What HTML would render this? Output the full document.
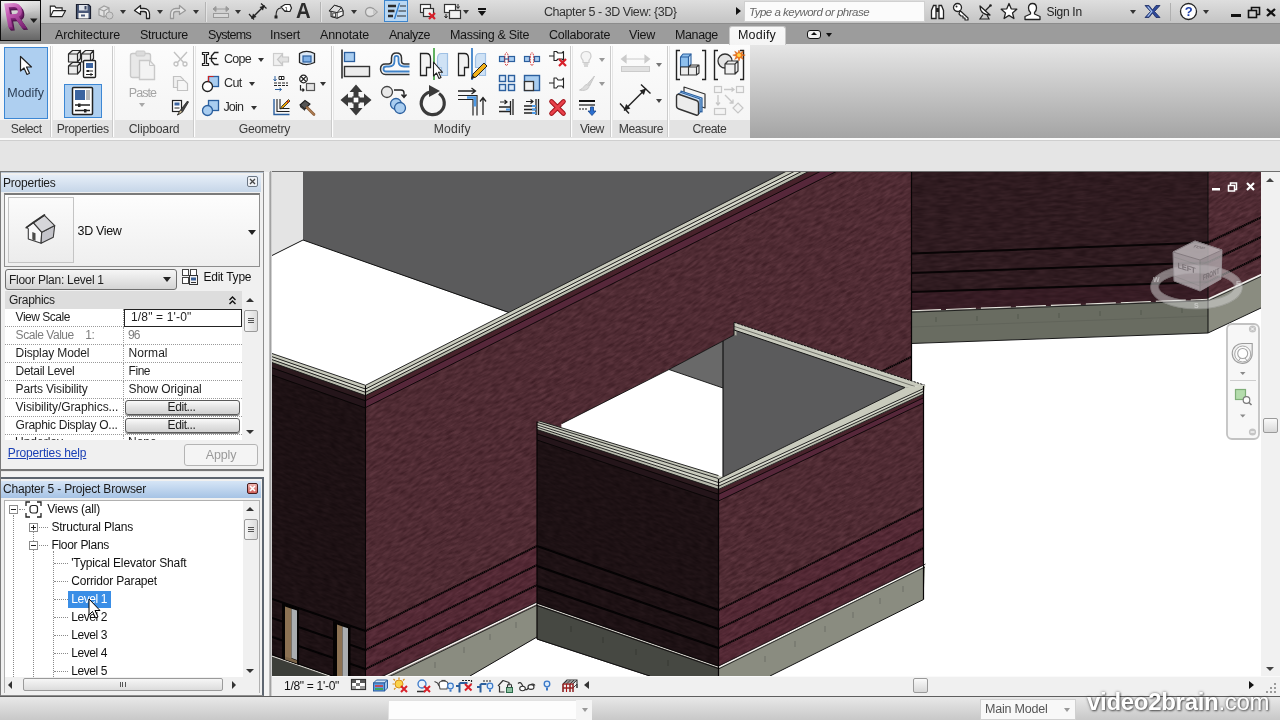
<!DOCTYPE html>
<html><head><meta charset="utf-8">
<style>
*{box-sizing:border-box;margin:0;padding:0}
html,body{width:1280px;height:720px;overflow:hidden;background:#e5e5e5;font-family:"Liberation Sans",sans-serif;font-size:12px;color:#1e1e1e}
.abs{position:absolute}
#title{left:0;top:0;width:1280px;height:24px;background:linear-gradient(#dedede,#c4c4c4);border-bottom:1px solid #8c8c8c}
#tabs{left:0;top:24px;width:1280px;height:20px;background:#9c9c9c}
#tabs span{position:absolute;top:3px;font-size:12.5px;color:#161616;white-space:nowrap}
#ribbon{left:0;top:44px;width:1280px;height:94px;background:linear-gradient(#e6e6e6,#a4a4a4)}
#ribpanels{left:0;top:44px;width:750px;height:94px;background:linear-gradient(#fcfcfc,#f3f3f3)}
#riblabels{left:0;top:120px;width:750px;height:18px;background:#e3e3e3}
.plabel{position:absolute;top:122px;font-size:12.5px;color:#333;text-align:center;white-space:nowrap}
.psep{position:absolute;top:46px;width:2px;height:91px;background:#fafafa;border-left:1px solid #c9c9c9}
#options{left:0;top:138px;width:1280px;height:34px;background:#e5e5e5;border-top:2px solid #fafafa;box-shadow:inset 0 1px 0 #cfcfcf}
#appbtn{left:0;top:0;width:41px;height:41px;background:linear-gradient(#e4e4e4 0%,#c2c2c2 28%,#8e8e8e 62%,#666 100%);border:1px solid #0c0c0c}
</style></head><body><div id="wrap" style="position:absolute;left:0;top:0;width:1280px;height:720px;will-change:transform;overflow:hidden">
<div class="abs" id="title"></div>
<div class="abs" id="tabs"></div>
<div class="abs" id="ribbon"></div>
<div class="abs" id="ribpanels"></div>
<div class="abs" id="riblabels"></div>
<div class="abs" id="options"></div>
<div class="abs" id="appbtn"></div>
<!--SCENE_START--><svg class="abs" style="left:272px;top:172px" width="990" height="504" viewBox="272 172 990 504">
<defs>
<filter id="nzLit" x="0" y="0" width="1" height="1" color-interpolation-filters="sRGB"><feTurbulence type="fractalNoise" baseFrequency="0.13 0.36" numOctaves="2" seed="7"/><feColorMatrix type="matrix" values="0.190 0 0 0 0.215  0.143 0 0 0 0.097  0.152 0 0 0 0.124  0 0 0 0 1"/></filter>
<filter id="nzDark" x="0" y="0" width="1" height="1" color-interpolation-filters="sRGB"><feTurbulence type="fractalNoise" baseFrequency="0.13 0.36" numOctaves="2" seed="11"/><feColorMatrix type="matrix" values="0.080 0 0 0 0.074  0.060 0 0 0 0.037  0.064 0 0 0 0.046  0 0 0 0 1"/></filter>
<filter id="nzFar" x="0" y="0" width="1" height="1" color-interpolation-filters="sRGB"><feTurbulence type="fractalNoise" baseFrequency="0.08 0.36" numOctaves="2" seed="5"/><feColorMatrix type="matrix" values="0.120 0 0 0 0.124  0.090 0 0 0 0.061  0.096 0 0 0 0.077  0 0 0 0 1"/></filter>
<clipPath id="cFar"><polygon points="911,172 1208,172 1208,300 911,311.5"/></clipPath>
<clipPath id="cFarR"><polygon points="1208,172 1262,172 1262,275 1208,300"/></clipPath>
<clipPath id="cLeft"><polygon points="272,354 365.5,386.5 365.5,676 272,676"/></clipPath>
<clipPath id="cMain"><polygon points="365.5,386.5 786,172 911.5,172 911.5,381 734,322.5 734,335 723,341 669,369.5 561.5,424 561.5,432 537,424 537,676 365.5,676"/></clipPath>
<clipPath id="cFront"><polygon points="537,429 718.5,489 718.5,676 537,676"/></clipPath>
<clipPath id="cRight"><polygon points="718.5,489.4 923.5,394 923.5,566 718.5,668"/></clipPath>
</defs>
<rect x="272" y="172" width="990" height="504" fill="#fff"/>
<polygon points="272,172 303,172 303,240 272,255" fill="#e4e4e4"/>
<polygon points="303,172 790,172 509,313 303,240" fill="#5b5b5c"/>
<path d="M272,255.5 L303,240 L509,312.5" fill="none" stroke="#111" stroke-width="1"/>
<polygon points="911,172 1208,172 1208,300 911,311.5" fill="#2f1b20"/><g clip-path="url(#cFar)"><g transform="matrix(1 -0.036 0 1 0 0)"><rect x="910" y="203" width="299" height="154" filter="url(#nzFar)"/></g></g>
<polygon points="911,292 1208,282 1208,300 911,311.5" fill="#5a1f38" opacity=".18"/>
<polygon points="911,311.5 1208,300 1208,333 911,343.5" fill="#696c61"/>
<g stroke="#080405" stroke-width="2" fill="none"><path d="M911,253.6 L1208,242.6"/><path d="M911,273 L1208,262.5"/><path d="M911,292 L1208,282"/></g>
<path d="M911,310.8 L1208,299.3" stroke="#e4e4dc" stroke-width="1.1" stroke-dasharray="30 5"/>
<path d="M911,312.2 L1208,300.7" stroke="#1a1a1a" stroke-width="0.9"/>
<path d="M911,343.5 L1208,333" stroke="#1a1a1a" stroke-width="1"/>
<path d="M911,327 L1208,316" stroke="#5c5f56" stroke-width="1" opacity=".6"/>
<g stroke="#55584f" stroke-width="1"><path d="M936,317v5"/><path d="M977,316v5"/><path d="M1018,314v5"/><path d="M1059,313v5"/><path d="M1100,311v5"/><path d="M1141,310v5"/><path d="M1182,308v5"/></g>
<polygon points="1208,172 1262,172 1262,275 1208,300" fill="#4f2b33"/><g clip-path="url(#cFarR)"><g transform="matrix(1 -0.47 0 1 0 0)"><rect x="1207" y="738" width="56" height="157" filter="url(#nzLit)"/></g></g>
<polygon points="1208,300 1262,275 1262,307.5 1208,333" fill="#8a8c80"/>
<g stroke="#080405" stroke-width="2.200" fill="none" stroke-dasharray="1.6 0.4"><path d="M1208,242.6 L1262,217"/><path d="M1208,262.5 L1262,236.6"/><path d="M1208,282 L1262,255.7"/></g>
<path d="M1208,299.3 L1262,274.3" stroke="#f2f2ee" stroke-width="1.5"/><path d="M1208,301 L1262,276" stroke="#1a1a1a" stroke-width=".8"/>
<path d="M1208,333 L1262,307.5" stroke="#1a1a1a" stroke-width="1"/>
<path d="M1208,172 L1208,333" stroke="#0c0c0c" stroke-width="1"/>
<polygon points="272,354 365.5,386.5 365.5,676 272,676" fill="#1d1114"/><g clip-path="url(#cLeft)"><g transform="matrix(1 0.345 0 1 0 0)"><rect x="271" y="226" width="96" height="358" filter="url(#nzDark)"/></g></g>
<polygon points="365.5,386.5 786,172 911.5,172 911.5,381 734,322.5 734,335 723,341 669,369.5 561.5,424 561.5,432 537,424 537,676 365.5,676" fill="#4f2b33"/><g clip-path="url(#cMain)"><g transform="matrix(1 -0.505 0 1 0 0)"><rect x="364" y="355" width="548" height="784" filter="url(#nzLit)"/></g></g>
<polygon points="365.5,631 537,546 537,605 388,676 365.5,676" fill="#6a1f40" opacity=".16"/>
<g stroke="#080405" stroke-width="2" fill="none" stroke-dasharray="1.6 0.4"><path d="M365.5,631 L537,546"/><path d="M365.5,650 L537,565"/><path d="M365.5,669 L537,585"/><path d="M911,357 L858,383"/></g>
<polygon points="388,676 537,604.5 537,637 470,676" fill="#8a8c80"/>
<polygon points="470,676 537,637 537,676" fill="#fff"/>
<path d="M385,676.5 L537,603.3" stroke="#f4f4f0" stroke-width="1.5"/>
<path d="M382,676.5 L537,602" stroke="#141414" stroke-width="0.8"/>
<path d="M389,676.8 L537,605.2" stroke="#141414" stroke-width="0.8"/>
<path d="M470,676 L537,637" stroke="#111" stroke-width="1"/>
<g stroke="#6d6f66" stroke-width="1"><path d="M435,662v6"/><path d="M464,647v6"/><path d="M490,634v6"/><path d="M516,622v6"/></g>
<g stroke="#050304" stroke-width="2" fill="none"><path d="M272,599 L365.5,631"/><path d="M272,618 L365.5,650"/><path d="M272,637 L365.5,669"/></g>
<polygon points="272,657 328,676 272,676" fill="#3c3e39"/>
<path d="M272,656 L330,676" stroke="#d0d0c8" stroke-width="1.300"/><path d="M272,654.700 L333,676" stroke="#050303" stroke-width="1"/>
<g><polygon points="282,603 299,609 299,665 282,659" fill="#050303"/>
<polygon points="285,606.5 291.5,608.7 291.5,660 285,657.8" fill="#8c7253"/>
<polygon points="291.5,608.7 297,610.6 297,660 291.5,658" fill="#a9adb0"/>
<polygon points="285,656.5 297,660.6 297,663.5 285,659.5" fill="#7c6548"/>
<polygon points="333,621 350.5,627 350.5,676 333,676" fill="#050303"/>
<polygon points="337,624.5 342.5,626.4 342.5,676 337,676" fill="#8c7253"/>
<polygon points="342.5,626.4 348,628.3 348,676 342.5,676" fill="#a9adb0"/></g>
<polygon points="272.0,362.5 365.5,395.5 365.5,400.8 272.0,367.8" fill="#2c1a1e"/><polygon points="272.0,367.8 365.5,400.8 365.5,408.0 272.0,375.0" fill="#24151a"/><path d="M272,367.8 L365.5,400.8" stroke="#070405" stroke-width="0.9"/><path d="M272,375.0 L365.5,408.0" stroke="#070405" stroke-width="0.9"/>
<polygon points="272.0,353.5 365.5,385.3 365.5,389.0 272.0,356.7" fill="#c9cbbd"/><polygon points="272.0,356.7 365.5,389.0 365.5,392.3 272.0,359.6" fill="#d6d8cb"/><polygon points="272.0,359.6 365.5,392.3 365.5,395.6 272.0,362.5" fill="#b9bbad"/><path d="M272,353.5 L365.5,385.3" stroke="#141414" stroke-width="0.9"/><path d="M272,356.7 L365.5,389.0" stroke="#141414" stroke-width="0.9"/><path d="M272,359.6 L365.5,392.3" stroke="#141414" stroke-width="0.9"/><path d="M272,362.5 L365.5,395.6" stroke="#141414" stroke-width="0.9"/>
<polygon points="365.5,395.6 860.0,145.5 860.0,151.4 365.5,400.6" fill="#48222b"/><polygon points="365.5,400.6 860.0,151.4 860.0,159.6 365.5,407.6" fill="#56273a"/><path d="M365.5,400.6 L860,151.4" stroke="#0c0607" stroke-width="0.9"/><path d="M365.5,407.6 L860,159.6" stroke="#0c0607" stroke-width="0.9"/>
<polygon points="365.5,385.3 860.0,133.8 860.0,138.1 365.5,389.0" fill="#c9cbbd"/><polygon points="365.5,389.0 860.0,138.1 860.0,141.8 365.5,392.3" fill="#d6d8cb"/><polygon points="365.5,392.3 860.0,141.8 860.0,145.5 365.5,395.6" fill="#b9bbad"/><path d="M365.5,385.3 L860,133.8" stroke="#141414" stroke-width="0.9"/><path d="M365.5,389.0 L860,138.1" stroke="#141414" stroke-width="0.9"/><path d="M365.5,392.3 L860,141.8" stroke="#141414" stroke-width="0.9"/><path d="M365.5,395.6 L860,145.5" stroke="#141414" stroke-width="0.9"/>
<path d="M365.5,385.5 L365.5,676" stroke="#070405" stroke-width="1.1"/>
<path d="M911.5,172 L911.5,381" stroke="#070405" stroke-width="1.2"/>
<polygon points="561.5,424 669,369.5 723,387.5 723,482 718.5,479.5 561.5,429" fill="#fff"/>
<polygon points="669,369.5 723,341 723,388" fill="#696969"/>
<polygon points="723,341 734,335 734,327 912,387 723,478" fill="#5b5b5c"/>
<path d="M723,341 L723,477" stroke="#0c0c0c" stroke-width="1.1"/>
<path d="M562,423.5 L669,369.5 L723,388" stroke="#111" stroke-width="0.9" fill="none"/>
<path d="M669,369.5 L723,341 L734,335" stroke="#111" stroke-width="0.9" fill="none"/>
<polygon points="734,322.5 925,385.5 905,387.5 734,330" fill="#c9cbbe"/>
<polygon points="734,322.5 734,335 736.5,335.5 736.5,330.5" fill="#b0b2a6"/>
<path d="M734,322.3 L925,385.3" stroke="#141414" stroke-width="1" stroke-dasharray="2.5 1"/>
<path d="M734,330 L905,387.5" stroke="#141414" stroke-width="1"/>
<path d="M734,326.3 L915,386.5" stroke="#5a5b54" stroke-width="0.8"/>
<path d="M734,322.5 L734,335" stroke="#141414" stroke-width="1"/>
<polygon points="537,429 718.5,489 718.5,676 537,676" fill="#1d1114"/><g clip-path="url(#cFront)"><g transform="matrix(1 0.33 0 1 0 0)"><rect x="536" y="190" width="184" height="311" filter="url(#nzDark)"/></g></g>
<polygon points="537,605 718.5,668 718.5,676 650,676 537,639" fill="#464842"/>
<polygon points="537,639.5 650,676.5 537,676.5" fill="#fff"/>
<path d="M537,639 L650,676" stroke="#111" stroke-width="1"/>
<path d="M537,604.3 L718.5,667.3" stroke="#d4d4cc" stroke-width="1.2"/>
<path d="M537,603 L718.5,666" stroke="#050304" stroke-width="0.8"/>
<path d="M537,605.6 L718.5,668.6" stroke="#050304" stroke-width="0.8"/>
<g stroke="#050304" stroke-width="2" fill="none"><path d="M537,546 L718.5,610"/><path d="M537,566 L718.5,629"/><path d="M537,586 L718.5,648"/></g>
<g stroke="#363832" stroke-width="1"><path d="M571,626v6"/><path d="M603,637v6"/><path d="M636,649v6"/><path d="M668,660v6"/></g>
<polygon points="718.5,489.4 923.5,394 923.5,566 718.5,668" fill="#522d35"/><g clip-path="url(#cRight)"><g transform="matrix(1 -0.495 0 1 0 0)"><rect x="718" y="748" width="207" height="379" filter="url(#nzLit)"/></g></g>
<polygon points="718.5,610 923.5,508 923.5,566 718.5,668" fill="#6a1f40" opacity=".16"/>
<polygon points="718.5,668 925,566 923.5,599.5 770,676 718.5,676" fill="#8a8c80"/>
<path d="M718.5,667.3 L925.5,565.3" stroke="#f4f4f0" stroke-width="1.5"/>
<path d="M718.5,666 L925.5,564" stroke="#141414" stroke-width="0.8"/>
<path d="M718.5,669 L925,567" stroke="#141414" stroke-width="0.8"/>
<path d="M770,676 L923.5,599.5" stroke="#111" stroke-width="1"/>
<g stroke="#080405" stroke-width="2" fill="none" stroke-dasharray="1.6 0.4"><path d="M718.5,610 L923.5,508"/><path d="M718.5,629 L923.5,529"/><path d="M718.5,648 L923.5,548"/></g>
<g stroke="#6d6f66" stroke-width="1"><path d="M765,656v6"/><path d="M795,641v6"/><path d="M825,626v6"/><path d="M853,612v6"/><path d="M880,598v6"/><path d="M903,586v6"/></g>
<polygon points="537.0,429.5 718.5,489.3 718.5,494.2 537.0,433.9" fill="#2c1a1e"/><polygon points="537.0,433.9 718.5,494.2 718.5,501.0 537.0,440.0" fill="#24151a"/><path d="M537,433.9 L718.5,494.2" stroke="#070405" stroke-width="0.9"/><path d="M537,440.0 L718.5,501.0" stroke="#070405" stroke-width="0.9"/>
<polygon points="718.5,475.6 723,477 718.5,479.6" fill="#c9cbbd"/>
<polygon points="537.0,420.3 718.5,475.6 718.5,478.6 537.0,422.3" fill="#c4c6b8"/><polygon points="537.0,422.3 718.5,478.6 718.5,482.5 537.0,424.9" fill="#c9cbbd"/><polygon points="537.0,424.9 718.5,482.5 718.5,485.9 537.0,427.2" fill="#d6d8cb"/><polygon points="537.0,427.2 718.5,485.9 718.5,489.3 537.0,429.5" fill="#b9bbad"/><path d="M537,420.3 L718.5,475.6" stroke="#141414" stroke-width="0.9"/><path d="M537,422.3 L718.5,478.6" stroke="#141414" stroke-width="0.9"/><path d="M537,424.9 L718.5,482.5" stroke="#141414" stroke-width="0.9"/><path d="M537,427.2 L718.5,485.9" stroke="#141414" stroke-width="0.9"/><path d="M537,429.5 L718.5,489.3" stroke="#141414" stroke-width="0.9"/>
<polygon points="536,419 542,419.9 537,422.3 536,422.3" fill="#4f2b33"/>
<polygon points="718.5,489.4 923.5,394.0 923.5,397.8 718.5,494.3" fill="#48222b"/><polygon points="718.5,494.3 923.5,397.8 923.5,403.0 718.5,501.0" fill="#56273a"/><path d="M718.5,494.3 L923.5,397.8" stroke="#0c0607" stroke-width="0.9"/><path d="M718.5,501.0 L923.5,403.0" stroke="#0c0607" stroke-width="0.9"/>
<polygon points="718.5,479.4 723,477 905,387.5 925.5,385.3 923.5,394 718.5,489.4" fill="#c9cbbd"/>
<polygon points="718.5,479.4 923.5,385.5 923.5,388.6 718.5,483.0" fill="#c9cbbd"/><polygon points="718.5,483.0 923.5,388.6 923.5,391.3 718.5,486.2" fill="#d6d8cb"/><polygon points="718.5,486.2 923.5,391.3 923.5,394.0 718.5,489.4" fill="#b9bbad"/><path d="M718.5,483.0 L923.5,388.6" stroke="#141414" stroke-width="0.9"/><path d="M718.5,486.2 L923.5,391.3" stroke="#141414" stroke-width="0.9"/><path d="M718.5,489.4 L923.5,394.0" stroke="#141414" stroke-width="0.9"/>
<path d="M718.5,479.4 L723,477 L905,387.5" stroke="#141414" stroke-width="0.9" fill="none"/>
<path d="M718.5,479 L718.5,676" stroke="#070405" stroke-width="1.2"/>
<path d="M923.5,386 L923.5,599.5" stroke="#070405" stroke-width="1.2"/>
<path d="M537,421.5 L537,639" stroke="#070405" stroke-width="1.2"/>
<!--OVERLAY_START--><!-- viewport window controls -->
<rect x="1212" y="188" width="8" height="2.500" fill="#fff"/>
<path d="M1230.500,185.500v-2.500h6v6.500h-2" fill="none" stroke="#fff" stroke-width="1.500"/><rect x="1228.500" y="185.500" width="6" height="5.500" fill="none" stroke="#fff" stroke-width="1.500"/>
<path d="M1247,183l7,7M1254,183l-7,7" stroke="#fff" stroke-width="2.200"/>
<!-- view cube -->
<g opacity=".5">
 <ellipse cx="1196.500" cy="287" rx="42" ry="18" fill="none" stroke="#dcdcdc" stroke-width="8"/>
 <ellipse cx="1196.500" cy="287" rx="46" ry="22" fill="none" stroke="#a8a8a8" stroke-width=".8" />
 <ellipse cx="1196.500" cy="287" rx="38" ry="14" fill="none" stroke="#a8a8a8" stroke-width=".8" />
</g>
<g opacity=".8">
 <path d="M1173,252l22,-11l27,9l-1,29l-21,12l-26,-10z" fill="#bdb6ba" stroke="#9a9498" stroke-width="1"/>
 <path d="M1200,260l22,-10l-1,29l-21,12z" fill="#b3acb0"/>
 <path d="M1173,252l22,-11l27,9l-22,10z" fill="#c9c3c6" stroke="#9a9498" stroke-width="1"/>
 <path d="M1200,260l0,31" stroke="#9c9c9c" stroke-width="1"/>
 <path d="M1174,257l26,8.500l21,-10M1174,276l26,10l21,-11.500" stroke="#a8a8a8" stroke-width=".8" fill="none"/>
</g>
<g opacity=".8" font-family="Liberation Sans" font-size="8" font-weight="bold" fill="#6e666a"><text transform="matrix(0.960 0.290 0 1 1177.500 268)" textLength="19">LEFT</text><text transform="matrix(0.910 -0.410 0 1 1203 280.500)" textLength="18" lengthAdjust="spacingAndGlyphs">FRONT</text><text transform="matrix(0.950 0.200 -0.600 0.500 1192 247)" font-size="6">TOP</text></g>
<g opacity=".55" font-family="Liberation Sans" font-size="7" font-weight="bold" fill="#e8e8e8"><text x="1194" y="308">S</text><text x="1236" y="286">E</text><text x="1153" y="282">W</text></g>
<!-- nav bar -->
<rect x="1227" y="324" width="32" height="115" rx="5" fill="#f7f7f7" stroke="#c2c2c2" stroke-width="1.800"/>
<circle cx="1252.500" cy="329" r="3.600" fill="#c4c4c4"/><path d="M1251,327.500l3,3M1254,327.500l-3,3" stroke="#fff" stroke-width="1"/>
<circle cx="1252.500" cy="432" r="3.600" fill="#c4c4c4"/><path d="M1250.500,432h4" stroke="#fff" stroke-width="1.200"/>
<path d="M1242.700,343.500h9.500v9.500a10,10 0 1 1 -9.500,-9.500z" fill="#f2f2f2" stroke="#9c9c9c" stroke-width="1.100"/><circle cx="1242.700" cy="354" r="8" fill="#fafafa" stroke="#a8a8a8" stroke-width="1"/><circle cx="1242.700" cy="353.500" r="5" fill="#fff" stroke="#a4a4a4" stroke-width="1.100"/><path d="M1238,361.500l2.500,-3.500M1247.500,361.500l-2.500,-3.500" stroke="#a4a4a4" stroke-width="1"/>
<path d="M1240,372h5.500l-2.750,3z" fill="#8a8a8a"/>
<path d="M1230,380.500h26" stroke="#cdcdcd"/>
<rect x="1235.500" y="389.500" width="10" height="10" fill="#b4dcac" stroke="#7fae78" stroke-width="1.200"/><circle cx="1246.500" cy="400" r="3.300" fill="#fff" stroke="#7a7a7a" stroke-width="1.200"/><path d="M1249,402.500l2.500,2.500" stroke="#7a7a7a" stroke-width="1.600"/>
<path d="M1240,414.500h5.500l-2.750,3z" fill="#8a8a8a"/>
<!--OVERLAY_END-->
</svg><!--SCENE_END-->
<!--TOP_START--><style>
#tabs span{position:absolute;top:3px;font-size:12.5px;color:#161616;white-space:nowrap}
.dd{position:absolute;width:0;height:0;border:3px solid transparent;border-top:4px solid #333;border-bottom:none}
.rt{position:absolute;font-size:12.500px;color:#2a2a2a;white-space:nowrap}
.ic{position:absolute;overflow:visible}
</style>
<!-- TITLE BAR CONTENT -->
<div class="abs" style="left:0;top:0;width:1280px;height:24px">
 <!-- open -->
 <svg class="ic" style="left:49px;top:4px" width="17.500" height="14" viewBox="0 0 20 16"><path d="M1.500,14.500V2.500h5l1.500,2h7v3" fill="#fff" stroke="#222" stroke-width="1.300"/><path d="M1.500,14.500l3.500,-7h14l-4,7z" fill="#f4f4f4" stroke="#222" stroke-width="1.300" stroke-linejoin="round"/></svg>
 <!-- save -->
 <svg class="ic" style="left:75px;top:3px" width="17" height="17" viewBox="0 0 17 17"><path d="M1.500,1.500h12l2,2v12h-14z" fill="#4a5878" stroke="#1c2030" stroke-width="1.200"/><rect x="4" y="2" width="8.500" height="5.500" fill="#dfe3ea"/><rect x="9.500" y="3" width="2" height="3.500" fill="#3a4560"/><rect x="3.500" y="10" width="10" height="5.500" fill="#f2f2f2"/><rect x="6" y="11.500" width="4" height="2" fill="#4a5878"/></svg>
 <!-- sync (gray) -->
 <svg class="ic" style="left:97px;top:3px" width="18" height="18" viewBox="0 0 18 18" opacity=".75"><path d="M2,6l5,-3l5,2v6l-5,3l-5,-2z M7,8l5,-3 M7,8v6 M2,6l5,2" fill="#e8e8e8" stroke="#8e8e8e" stroke-width="1.200"/><circle cx="12.500" cy="12.500" r="3.500" fill="#cfcfcf" stroke="#8e8e8e"/></svg>
 <div class="dd" style="left:120px;top:10px"></div>
 <!-- undo -->
 <svg class="ic" style="left:133px;top:4px" width="18" height="16" viewBox="0 0 18 16"><path d="M1.500,6.500L7.500,1.500V4.500H11c3.500,0 5.500,2.500 5.500,5.500v4.500h-3V10c0,-1.500 -1,-2.500 -2.500,-2.500H7.500v3z" fill="#fff" stroke="#222" stroke-width="1.300" stroke-linejoin="round"/></svg>
 <div class="dd" style="left:157px;top:10px"></div>
 <!-- redo gray -->
 <svg class="ic" style="left:169px;top:4px" width="18" height="16" viewBox="0 0 18 16"><path d="M16.500,6.500L10.500,1.500V4.500H7c-3.500,0 -5.500,2.500 -5.500,5.500v4.500h3V10c0,-1.500 1,-2.500 2.500,-2.500h3.500v3z" fill="#e6e6e6" stroke="#9a9a9a" stroke-width="1.300" stroke-linejoin="round"/></svg>
 <div class="dd" style="left:193px;top:10px"></div>
 <div class="abs" style="left:205px;top:2px;width:1px;height:20px;background:#b4b4b4;border-right:1px solid #e4e4e4;width:2px"></div>
 <!-- measure gray -->
 <svg class="ic" style="left:212px;top:5px" width="18" height="14" viewBox="0 0 18 14"><path d="M1,4h16M1,4l3,-2.500v5zM17,4l-3,-2.500v5z" stroke="#9a9a9a" fill="#9a9a9a" stroke-width="1"/><rect x="1.500" y="8.500" width="15" height="4" fill="#d8d8d8" stroke="#9a9a9a"/></svg>
 <div class="dd" style="left:235px;top:10px"></div>
 <!-- aligned dim -->
 <svg class="ic" style="left:248px;top:2px" width="20" height="20" viewBox="0 0 20 20"><path d="M3.500,16.500L16.500,3.500" stroke="#222" stroke-width="1.400"/><path d="M3.500,16.500L5,11.500L8.500,15z M16.500,3.500L15,8.500L11.500,5z" fill="#222"/><path d="M1,12l5,5.500 M13,1.500l5.500,5" stroke="#222" stroke-width="1.200"/></svg>
 <!-- tag -->
 <svg class="ic" style="left:273px;top:3px" width="20" height="18" viewBox="0 0 20 18"><path d="M8,4l4,-2.500h5l1.500,3.500l-1.500,3.500h-5z" fill="#fff" stroke="#222" stroke-width="1.200"/><text x="11.500" y="8" font-size="6" font-family="Liberation Sans" fill="#111">1</text><path d="M8,5c-4,0 -5,3 -5,8" stroke="#222" stroke-width="1.200" fill="none"/><rect x="1.500" y="12.500" width="3" height="3" fill="#222"/></svg>
 <div class="abs" style="left:296px;top:-2px;font-size:22px;font-weight:bold;color:#2c2c2c;transform:scaleX(.92);transform-origin:0 0">A</div>
 <div class="abs" style="left:320px;top:2px;width:2px;height:20px;background:#b4b4b4;border-right:1px solid #e4e4e4"></div>
 <!-- 3d house -->
 <svg class="ic" style="left:328px;top:4px" width="16.500" height="15.500" viewBox="0 0 19 18"><path d="M1.500,8L7.500,1.500l8,2.500l2,4v5l-7,3.500l-7,-2V8.500z" fill="#f4f4f4" stroke="#222" stroke-width="1.300" stroke-linejoin="round"/><path d="M1.500,8L7.500,1.500l8,2.500l-5,6z" fill="#ddd" stroke="#222" stroke-width="1.100" stroke-linejoin="round"/><path d="M10.500,10v6.500M10.500,10l7,-2" stroke="#222" fill="none"/><rect x="5.500" y="10.500" width="3" height="4.500" fill="#fff" stroke="#222"/></svg>
 <div class="dd" style="left:351px;top:10px"></div>
 <!-- thin lines gray -->
 <svg class="ic" style="left:364px;top:5px" width="15" height="14" viewBox="0 0 15 14"><circle cx="6" cy="7" r="4.500" fill="#e0e0e0" stroke="#9a9a9a" stroke-width="1.300"/><path d="M9,3l4.500,4l-4.500,4" fill="#c8c8c8" stroke="#9a9a9a"/></svg>
 <!-- selected icon -->
 <div class="abs" style="left:384px;top:0;width:24px;height:22px;background:#b9d7f2;border:1px solid #3d85cc"></div>
 <svg class="ic" style="left:387px;top:3px" width="19" height="16" viewBox="0 0 19 16"><path d="M1,3h8M1,8h6.500M1,13h5" stroke="#2a2a2a" stroke-width="2.600"/><path d="M13,3h6M11.500,8h7.500M10,13h9" stroke="#2a2a2a" stroke-width="1.200"/><path d="M12.500,0L7.500,16" stroke="#2f7fd0" stroke-width="1.300"/></svg>
 <!-- close hidden -->
 <svg class="ic" style="left:419px;top:3px" width="19" height="18" viewBox="0 0 19 18"><rect x="1.500" y="1.500" width="10" height="8" fill="#fff" stroke="#333" stroke-width="1.200"/><rect x="4.500" y="5.500" width="10" height="8" fill="#f0f0f0" stroke="#333" stroke-width="1.200"/><path d="M10,10l6,6M16,10l-6,6" stroke="#d8202a" stroke-width="2.200"/></svg>
 <!-- switch windows -->
 <svg class="ic" style="left:443px;top:3px" width="19" height="18" viewBox="0 0 19 18"><rect x="1.500" y="1.500" width="11" height="8" fill="#fff" stroke="#333" stroke-width="1.200"/><rect x="6.500" y="7.500" width="11" height="8" fill="#f0f0f0" stroke="#333" stroke-width="1.200"/><path d="M15,1v4M13.500,3.500l1.500,2l1.500,-2M3,11v4M1.500,13l1.500,2l1.500,-2" stroke="#222" fill="none"/></svg>
 <div class="dd" style="left:463px;top:10px"></div>
 <div class="abs" style="left:478px;top:8px;width:8px;height:1.500px;background:#111"></div>
 <div class="dd" style="left:478px;top:11px;border-width:4px;border-top:5px solid #111"></div>
 <!-- title -->
 <div class="abs" style="left:544px;top:5px;font-size:12.500px;letter-spacing:-0.44px;color:#333;white-space:nowrap" id="ttl">Chapter 5 - 3D View: {3D}</div>
 <div class="abs" style="left:736px;top:7px;width:0;height:0;border:4px solid transparent;border-left:5px solid #111;border-right:none"></div>
 <!-- search -->
 <div class="abs" style="left:744px;top:1px;width:181px;height:21px;background:#fbfbfb;border:1px solid #d0d0d0;font-size:11.500px;letter-spacing:-0.5px;font-style:italic;color:#666;padding:4px 0 0 4px;white-space:nowrap">Type a keyword or phrase</div>
 <!-- binoculars -->
 <svg class="ic" style="left:929px;top:3px" width="17" height="17" viewBox="0 0 17 17"><path d="M2.500,15.500v-8l2,-5h2.500v13z M14.500,15.500v-8l-2,-5h-2.500v13z" fill="#fff" stroke="#222" stroke-width="1.300"/><rect x="7" y="5" width="3" height="4" fill="#222"/></svg>
 <!-- key -->
 <svg class="ic" style="left:952px;top:2px" width="18" height="19" viewBox="0 0 18 19"><circle cx="5.500" cy="5.500" r="4" fill="#fff" stroke="#222" stroke-width="1.300"/><circle cx="4.500" cy="4.500" r="1" fill="#222"/><path d="M8,8.500l8,7.500v2h-3v-2h-2v-2h-2l-2,-2z" fill="#fff" stroke="#222" stroke-width="1.200" stroke-linejoin="round"/></svg>
 <!-- satellite -->
 <svg class="ic" style="left:977px;top:3px" width="17" height="17" viewBox="0 0 17 17"><path d="M3,3c0,6 4,9 10,9z" fill="#fff" stroke="#222" stroke-width="1.300" stroke-linejoin="round"/><path d="M8,8l5,-5" stroke="#222" stroke-width="1.200"/><circle cx="13.500" cy="2.500" r="1.300" fill="#222"/><path d="M6,11.500l-3,4.500h9l-2,-4" fill="none" stroke="#222" stroke-width="1.200"/></svg>
 <!-- star -->
 <svg class="ic" style="left:1000px;top:2px" width="18" height="18" viewBox="0 0 18 18"><path d="M9,1.500l2.200,5.300l5.600,0.400l-4.300,3.700l1.400,5.600L9,13.400l-4.900,3.100l1.400,-5.600L1.200,7.200l5.600,-0.400z" fill="#fff" stroke="#222" stroke-width="1.300" stroke-linejoin="round"/></svg>
 <!-- person -->
 <svg class="ic" style="left:1023px;top:2px" width="19" height="19" viewBox="0 0 19 19"><path d="M9.500,1.500c2.500,0 4,1.800 4,4.500c0,2.200 -1,3.800 -2,4.600v1.400l5.500,2.500v3h-15v-3l5.500,-2.500v-1.400c-1,-0.800 -2,-2.400 -2,-4.600c0,-2.700 1.500,-4.500 4,-4.500z" fill="#fff" stroke="#222" stroke-width="1.300" stroke-linejoin="round"/></svg>
 <div class="abs" style="left:1046.500px;top:5px;font-size:12px;letter-spacing:-0.3px;color:#222;white-space:nowrap" id="signin">Sign In</div>
 <div class="dd" style="left:1130px;top:10px"></div>
 <!-- X exchange -->
 <svg class="ic" style="left:1144px;top:4px" width="17" height="15" viewBox="0 0 17 15"><path d="M1,1.500h4l3.500,4.500l3.500,-4.500h4l-5.500,6l5.500,6h-4l-3.500,-4.500l-3.500,4.500h-4l5.500,-6z" fill="#2f4a9a" stroke="#1a2a60" stroke-width=".8"/><path d="M3,2.500h1.500l4,5l-4,5H3l4,-5z" fill="#a8c4ee"/></svg>
 <div class="abs" style="left:1170px;top:3px;width:1px;height:18px;background:#b0b0b0"></div>
 <!-- help -->
 <svg class="ic" style="left:1179px;top:2px" width="19" height="19" viewBox="0 0 19 19"><circle cx="9.500" cy="9.500" r="8" fill="#fff" stroke="#222" stroke-width="1.300"/><text x="5.800" y="14.200" font-size="13" font-weight="bold" font-family="Liberation Sans" fill="#1e3fa8">?</text></svg>
 <div class="dd" style="left:1203px;top:10px"></div>
 <!-- window controls -->
 <div class="abs" style="left:1231px;top:14px;width:10px;height:3px;background:#111"></div>
 <svg class="ic" style="left:1247px;top:6px" width="14" height="13" viewBox="0 0 14 13"><path d="M4.500,4V1.500h8v7H10" fill="none" stroke="#111" stroke-width="1.600"/><rect x="1.500" y="4.500" width="8" height="7" fill="none" stroke="#111" stroke-width="1.600"/></svg>
 <svg class="ic" style="left:1266px;top:8px" width="10" height="9" viewBox="0 0 10 9"><path d="M1,1l8,7M9,1l-8,7" stroke="#111" stroke-width="2.300"/></svg>
</div>
<!-- TABS -->
<div class="abs" id="tabs2" style="left:0;top:24px;width:1280px;height:20px">
<style>#tabs2 span{position:absolute;top:4px;font-size:12.500px;color:#141414;white-space:nowrap}</style>
 <div class="abs" style="left:729px;top:2px;width:57px;height:19px;background:linear-gradient(#f8f8f8,#f4f4f4);border:1px solid #c8c8c8;border-bottom:none;border-radius:3px 3px 0 0"></div>
 <span style="left:55px;letter-spacing:-0.14px">Architecture</span><span style="left:140px;letter-spacing:-0.30px">Structure</span><span style="left:208px;letter-spacing:-0.70px">Systems</span><span style="left:270px;letter-spacing:-0.22px">Insert</span><span style="left:320px;letter-spacing:-0.12px">Annotate</span><span style="left:389px;letter-spacing:-0.50px">Analyze</span><span style="left:450px;letter-spacing:-0.31px">Massing &amp; Site</span><span style="left:549px;letter-spacing:-0.26px">Collaborate</span><span style="left:629px;letter-spacing:-0.22px">View</span><span style="left:675px;letter-spacing:-0.37px">Manage</span><span style="left:738px;letter-spacing:0.20px">Modify</span>
 <div class="abs" style="left:807px;top:6px;width:14px;height:9px;border:1.500px solid #111;border-radius:3px;background:#f0f0f0"></div>
 <div class="abs" style="left:811px;top:8px;width:0;height:0;border:3px solid transparent;border-bottom:3.500px solid #111;border-top:none"></div>
 <div class="dd" style="left:826px;top:9px;border-top-color:#111"></div>
</div>
<div class="abs" style="left:0;top:44px;width:760px;height:94px">
<style>
.psep{position:absolute;top:2px;width:3px;height:91px;background:#fefefe;border-left:1px solid #cbcbcb;border-right:1px solid #e6e6e6}
.plabel{position:absolute;top:78px;font-size:12.200px;color:#3a3a3a;white-space:nowrap;transform:translateX(-50%)}
</style>
 <div class="psep" style="left:50px"></div><div class="psep" style="left:112px"></div><div class="psep" style="left:193px"></div><div class="psep" style="left:331px"></div><div class="psep" style="left:570px"></div><div class="psep" style="left:610px"></div><div class="psep" style="left:667px"></div>
 <div class="plabel" style="left:26.2px;letter-spacing:-0.52px">Select</div><div class="plabel" style="left:82.7px;letter-spacing:-0.36px">Properties</div><div class="plabel" style="left:154.1px;letter-spacing:-0.16px">Clipboard</div><div class="plabel" style="left:264.4px;letter-spacing:-0.29px">Geometry</div><div class="plabel" style="left:452.2px;letter-spacing:0.17px">Modify</div><div class="plabel" style="left:591.9px;letter-spacing:-0.61px">View</div><div class="plabel" style="left:640.9px;letter-spacing:-0.45px">Measure</div><div class="plabel" style="left:709.4px;letter-spacing:-0.48px">Create</div>
 <!-- Select: Modify button -->
 <div class="abs" style="left:4px;top:3px;width:44px;height:72px;background:#aecff0;border:1px solid #3c87d4"></div>
 <svg class="ic" style="left:19px;top:11px" width="14" height="21" viewBox="0 0 14 21"><path d="M1.500,1.500V16l3.500,-3l3,6.500l2.500,-1.200l-3,-6.300h5z" fill="#fff" stroke="#222" stroke-width="1.200" stroke-linejoin="round"/></svg>
 <div class="rt" style="left:7.3px;top:42px;color:#2c3e55;letter-spacing:-0.02px">Modify</div>
 <!-- Properties: type props -->
 <svg class="ic" style="left:67px;top:5px" width="31" height="30" viewBox="0 0 31 30"><g fill="#ececec" stroke="#2a2a2a" stroke-width="1.200" stroke-linejoin="round"><path d="M1.500,5l4,-3.500h8l-3,3.500z M1.500,5h9v8h-9z M10.500,5l3,-3.500v8l-3,3.500z"/><path d="M14.500,5l4,-3.500h8l-3,3.500z M14.500,5h9v8h-9z M23.500,5l3,-3.500v8l-3,3.500z"/><path d="M1.500,17l4,-3.500h8l-3,3.500z M1.500,17h9v8h-9z M10.500,17l3,-3.500v8l-3,3.500z"/></g><rect x="16.500" y="11.500" width="12" height="17" rx="1" fill="#fff" stroke="#222" stroke-width="1.400"/><rect x="19" y="14" width="7" height="5" fill="#3c64a0"/><path d="M19,22h7M19,25.500h7" stroke="#222" stroke-width="1.200"/><rect x="20" y="21" width="2" height="2" fill="#222"/><rect x="23" y="24.500" width="2" height="2" fill="#222"/></svg>
 <div class="abs" style="left:64px;top:40px;width:38px;height:34px;background:#aecff0;border:1px solid #3c87d4"></div>
 <svg class="ic" style="left:71px;top:42px" width="24" height="30" viewBox="0 0 24 30"><rect x="1.500" y="1.500" width="20" height="27" rx="1" fill="#fff" stroke="#222" stroke-width="1.500"/><rect x="4" y="4" width="10" height="10" fill="#3c64a0"/><rect x="15" y="4" width="4" height="10" fill="#b8b8b8"/><path d="M4,19h15M4,24.500h15" stroke="#222" stroke-width="1.300"/><rect x="7" y="17.500" width="2.500" height="3.500" fill="#222"/><rect x="13" y="23" width="2.500" height="3.500" fill="#222"/></svg>
 <!-- Clipboard -->
 <svg class="ic" style="left:129px;top:6px" width="28" height="32" viewBox="0 0 28 32" opacity=".8"><rect x="1.500" y="3.500" width="20" height="24" rx="2" fill="#e4e4e4" stroke="#bdbdbd" stroke-width="1.400"/><rect x="7" y="1" width="9" height="5" rx="1" fill="#d4d4d4" stroke="#bdbdbd"/><path d="M10.500,10.500h10l5,5v14h-15z" fill="#f2f2f2" stroke="#bdbdbd" stroke-width="1.400"/><path d="M20.500,10.500v5h5" fill="none" stroke="#bdbdbd"/></svg>
 <div class="rt" style="left:128.8px;top:42px;color:#a4a4a4;letter-spacing:-0.96px">Paste</div>
 <div class="dd" style="left:139px;top:59px;border-top-color:#a8a8a8"></div>
 <svg class="ic" style="left:172px;top:7px" width="17" height="16" viewBox="0 0 17 16"><path d="M2,1l10,11M15,1L5,12" stroke="#c2c2c2" stroke-width="1.400"/><circle cx="4" cy="13" r="2" fill="none" stroke="#c2c2c2" stroke-width="1.300"/><circle cx="13" cy="13" r="2" fill="none" stroke="#c2c2c2" stroke-width="1.300"/></svg>
 <svg class="ic" style="left:172px;top:31px" width="17" height="17" viewBox="0 0 17 17"><path d="M1.500,1.500h7l3,3v8h-10z" fill="#f0f0f0" stroke="#c2c2c2" stroke-width="1.200"/><path d="M5.500,5.500h7l3,3v7h-10z" fill="#f6f6f6" stroke="#c2c2c2" stroke-width="1.200"/></svg>
 <svg class="ic" style="left:171px;top:55px" width="18" height="18" viewBox="0 0 18 18"><rect x="1.500" y="1.500" width="9" height="11" fill="#fff" stroke="#222" stroke-width="1.200"/><rect x="3.500" y="3.500" width="5" height="3" fill="#3c64a0"/><path d="M3.500,9h5" stroke="#222"/><path d="M16.500,2l-7,9l-3,5l5,-3l6,-10z" fill="#444" stroke="#222" stroke-width=".8"/><path d="M6.500,16l3,-5l2,2z" fill="#d8c7a0" stroke="#222" stroke-width=".6"/></svg>
 <!-- Geometry -->
 <svg class="ic" style="left:201px;top:7px" width="19" height="16" viewBox="0 0 19 16"><path d="M1.500,1.500h6v2h-2v9h2v2h-6v-2h2v-9h-2z" fill="#f0f0f0" stroke="#222" stroke-width="1.200"/><path d="M17.500,1.500h-4l-3,3.500v5l3,3.500h4" fill="none" stroke="#222" stroke-width="1.400"/><path d="M8,7.500h8" stroke="#222" stroke-width="1.300"/></svg>
 <div class="rt" style="left:223.9px;top:8px;letter-spacing:-0.70px">Cope</div><div class="dd" style="left:258px;top:14px"></div>
 <svg class="ic" style="left:201px;top:31px" width="19" height="18" viewBox="0 0 19 18"><rect x="7.500" y="1.500" width="10" height="10" fill="#a9cdf0" stroke="#2b5f9e" stroke-width="1.300"/><circle cx="6.500" cy="11.500" r="5" fill="#fff" stroke="#222" stroke-width="1.300"/><path d="M7.500,6.500v-5h5" fill="none" stroke="#c22" stroke-width="1.200"/></svg>
 <div class="rt" style="left:223.9px;top:32px;letter-spacing:-0.53px">Cut</div><div class="dd" style="left:249px;top:38px"></div>
 <svg class="ic" style="left:201px;top:55px" width="19" height="18" viewBox="0 0 19 18"><rect x="7.500" y="1.500" width="10" height="10" fill="#a9cdf0" stroke="#2b5f9e" stroke-width="1.300"/><circle cx="6.500" cy="11.500" r="5" fill="#a9cdf0" stroke="#2b5f9e" stroke-width="1.300"/></svg>
 <div class="rt" style="left:223.4px;top:56px;letter-spacing:-0.83px">Join</div><div class="dd" style="left:251px;top:62px"></div>
 <svg class="ic" style="left:272px;top:7px" width="18" height="17" viewBox="0 0 18 17" opacity=".8"><rect x="1.500" y="2.500" width="9" height="12" fill="#eee" stroke="#c2c2c2" stroke-width="1.200"/><path d="M16.500,6h-6v-3l-5,5.500l5,5.500v-3h6z" fill="#ddd" stroke="#bbb" stroke-width="1.200"/></svg>
 <svg class="ic" style="left:272px;top:31px" width="18" height="18" viewBox="0 0 18 18"><path d="M3,1v5M1.500,4l1.500,2l1.500,-2" stroke="#2b5f9e" fill="none"/><path d="M7,1.500h5v3h-5zM9.500,1.500v3" stroke="#222" fill="#fff"/><path d="M2,8h14M2,10.500h14" stroke="#222" stroke-width="1.200" stroke-dasharray="3 1"/><path d="M3,14.500h6M7.500,13l2,1.500l-2,1.500" stroke="#2b5f9e" fill="none"/></svg>
 <svg class="ic" style="left:272px;top:54px" width="19" height="19" viewBox="0 0 19 19"><path d="M2,1v15.500h15.500" fill="none" stroke="#2b5f9e" stroke-width="1.400"/><path d="M5,1v12.500h12.500M8,1v9.500h9.500" fill="none" stroke="#222" stroke-width="1.100"/><path d="M16.500,1.500l1.500,1.500l-7,7l-2.500,1l1,-2.500z" fill="#f0a500" stroke="#222" stroke-width=".8"/><path d="M15,3l1.500,1.500" stroke="#c22" stroke-width="1.500"/></svg>
 <svg class="ic" style="left:298px;top:6px" width="18" height="18" viewBox="0 0 18 18"><path d="M1.500,3.500c4,-2.500 10,-2.500 15,0v9c-5,2.500 -11,2.500 -15,0z" fill="#dce9f7" stroke="#222" stroke-width="1.300"/><rect x="5" y="6" width="8" height="6" fill="#7fb0e6" stroke="#2b5f9e" stroke-width="1.200"/></svg>
 <svg class="ic" style="left:298px;top:30px" width="18" height="19" viewBox="0 0 18 19"><circle cx="5.500" cy="5" r="3.800" fill="#fff" stroke="#222" stroke-width="1.200"/><path d="M3,2.500l5,5M8,2.500l-5,5" stroke="#222" stroke-width="1.100"/><rect x="8.500" y="9.500" width="8" height="7" fill="#e4e4e4" stroke="#555" stroke-width="1.200"/><path d="M2.500,11v5h3M4.500,14.500l1.500,1.500l-1.500,1.500" stroke="#222" fill="none" stroke-width="1.200"/></svg>
 <div class="dd" style="left:320px;top:38px"></div>
 <svg class="ic" style="left:298px;top:55px" width="18" height="18" viewBox="0 0 18 18"><path d="M2,6l5,-4.500l5,3.500l-5,5z" fill="#555" stroke="#222" stroke-width="1.100"/><path d="M2,6v2l5,4v-2z" fill="#333"/><path d="M9,8.500l7,7" stroke="#8a5a33" stroke-width="2.600" stroke-linecap="round"/><path d="M9,8.500l7,7" stroke="#c9986b" stroke-width="1" stroke-linecap="round"/></svg>
 <!-- Modify panel big icons -->
 <svg class="ic" style="left:340px;top:5px" width="32" height="30" viewBox="0 0 32 30"><path d="M2,0.500v29" stroke="#222" stroke-width="1.500"/><rect x="4.500" y="3.500" width="10" height="9" fill="#a9cdf0" stroke="#2b5f9e" stroke-width="1.300"/><rect x="4.500" y="17.500" width="25" height="10" fill="#ececec" stroke="#333" stroke-width="1.400"/></svg>
 <svg class="ic" style="left:379px;top:7px" width="32" height="26" viewBox="0 0 32 26"><path d="M1.500,18c0,-3 2,-5 5,-5h3c2,0 3,-1 3,-3v-3c0,-3 2,-5 5,-5c3,0 5,2 5,5v3c0,2 1,3 3,3h5" fill="none" stroke="#333" stroke-width="1.500"/><path d="M1.500,18c0,3 2,5.500 5,5.500h24" fill="none" stroke="#333" stroke-width="1.500"/><path d="M4.500,18c0,-1.500 1,-2.500 2.500,-2.500h3c3.500,0 5.500,-2 5.500,-5.500v-3c0,-1.500 0.800,-2.200 2,-2.200c1.200,0 2,0.700 2,2.200v3c0,3.500 2,5.500 5.500,5.500h5.500M4.500,18c0,1.500 1,2.500 2.500,2.500h23.500" fill="none" stroke="#3f82c8" stroke-width="1.800"/></svg>
 <svg class="ic" style="left:419px;top:4px" width="30" height="32" viewBox="0 0 30 32"><path d="M1.500,27.500v-22h6c3,0 4,2 4,5v9h-4v8z" fill="#f2f2f2" stroke="#222" stroke-width="1.300"/><path d="M28.500,27.500v-22h-6c-3,0 -4,2 -4,5v9h4v8z" fill="#cfe2f5" stroke="#9fc0e4" stroke-width="1.200"/><path d="M15,0v32" stroke="#3aa03a" stroke-width="1.600"/><path d="M14.500,14v14l3,-3l2.500,5.500l2,-1l-2.500,-5.200h4z" fill="#fff" stroke="#222" stroke-width="1.100" stroke-linejoin="round"/></svg>
 <svg class="ic" style="left:457px;top:4px" width="32" height="32" viewBox="0 0 32 32"><path d="M1.500,27.500v-22h6c3,0 4,2 4,5v9h-4v8z" fill="#f2f2f2" stroke="#222" stroke-width="1.300"/><path d="M28.500,27.500v-22h-6c-3,0 -4,2 -4,5v9h4v8z" fill="#cfe2f5" stroke="#9fc0e4" stroke-width="1.200"/><path d="M15,0v32" stroke="#3f82c8" stroke-width="1.800"/><path d="M27,15l3,3l-11,11l-4.500,1.500l1.500,-4.500z" fill="#f2b21a" stroke="#222" stroke-width="1"/><path d="M15.800,27l-1.300,3.500l3.500,-1.300z" fill="#222"/></svg>
 <svg class="ic" style="left:340px;top:40px" width="32" height="32" viewBox="0 0 32 32"><path d="M16,0.500l6.500,7.500h-4v5.500h5.500v-4l7.500,6.500l-7.500,6.500v-4h-5.500v5.500h4l-6.500,7.500l-6.500,-7.500h4v-5.500h-5.500v4l-7.500,-6.500l7.500,-6.500v4h5.500v-5.500h-4z" fill="#3a3a3a"/><rect x="13" y="13" width="6" height="6" fill="#fff" stroke="#3a3a3a" stroke-width="1.300"/></svg>
 <svg class="ic" style="left:380px;top:41px" width="30" height="30" viewBox="0 0 30 30"><circle cx="7" cy="7" r="5.500" fill="#e9e9e9" stroke="#444" stroke-width="1.300"/><circle cx="16" cy="19" r="5.500" fill="#a9cdf0" stroke="#2b5f9e" stroke-width="1.300"/><circle cx="20" cy="23" r="5.500" fill="#a9cdf0" stroke="#2b5f9e" stroke-width="1.300"/><path d="M14,5h7c2,0 3,1 3,3v4M21.500,9.500l2.500,3l2.500,-3" fill="none" stroke="#222" stroke-width="1.400"/></svg>
 <svg class="ic" style="left:419px;top:41px" width="30" height="32" viewBox="0 0 30 32"><path d="M11,7a11.500,11.500 0 1 0 9,1.500" fill="none" stroke="#3a3a3a" stroke-width="3.200"/><path d="M10,0l11,6l-11,6z" fill="#3a3a3a"/></svg>
 <svg class="ic" style="left:457px;top:41px" width="33" height="32" viewBox="0 0 33 32"><path d="M1,6h17M14.500,3l4,3l-4,3" fill="none" stroke="#222" stroke-width="1.300"/><path d="M1,10.500h19v20M1,14.500h15v16" fill="none" stroke="#222" stroke-width="1.200"/><path d="M10,12.500h8v9" fill="none" stroke="#4e9ae6" stroke-width="2.600"/><path d="M26,30v-17M23,16.500l3,-4l3,4" fill="none" stroke="#222" stroke-width="1.300"/></svg>
 <!-- small icons col1 -->
 <svg class="ic" style="left:498px;top:6px" width="18" height="18" viewBox="0 0 18 18"><rect x="1.500" y="6.500" width="5" height="5" fill="#a9cdf0" stroke="#2b5f9e" stroke-width="1.200"/><rect x="10.500" y="6.500" width="6" height="5" fill="#a9cdf0" stroke="#2b5f9e" stroke-width="1.200"/><path d="M6.500,9h4" stroke="#2b5f9e" stroke-width="1.200"/><ellipse cx="8.500" cy="9" rx="1.800" ry="6.500" fill="none" stroke="#c22" stroke-width="1" stroke-dasharray="1.500 1"/></svg>
 <svg class="ic" style="left:498px;top:30px" width="18" height="18" viewBox="0 0 18 18"><g fill="#dbe9f8" stroke="#2b5f9e" stroke-width="1.400"><rect x="1.500" y="1.500" width="6" height="6"/><rect x="10.500" y="1.500" width="6" height="6"/><rect x="1.500" y="10.500" width="6" height="6"/><rect x="10.500" y="10.500" width="6" height="6"/></g></svg>
 <svg class="ic" style="left:498px;top:54px" width="18" height="18" viewBox="0 0 18 18"><path d="M15,1v16M12.500,3v14" stroke="#222" stroke-width="1.300"/><path d="M2,4h7M6.500,2l2.500,2l-2.500,2" stroke="#222" fill="none" stroke-width="1.200"/><path d="M1,9h11M1,13.500h11" stroke="#222" stroke-width="1.300"/><path d="M8,11.500h4" stroke="#4e9ae6" stroke-width="2"/></svg>
 <!-- col2 -->
 <svg class="ic" style="left:523px;top:6px" width="18" height="18" viewBox="0 0 18 18"><rect x="1.500" y="6.500" width="5" height="5" fill="#a9cdf0" stroke="#2b5f9e" stroke-width="1.200"/><rect x="11.500" y="6.500" width="5" height="5" fill="#a9cdf0" stroke="#2b5f9e" stroke-width="1.200"/><ellipse cx="9" cy="9" rx="1.800" ry="6.500" fill="none" stroke="#c22" stroke-width="1" stroke-dasharray="1.500 1"/></svg>
 <svg class="ic" style="left:523px;top:30px" width="18" height="18" viewBox="0 0 18 18"><rect x="1.500" y="1.500" width="15" height="15" fill="#a9cdf0" stroke="#2b5f9e" stroke-width="1.400"/><rect x="1.500" y="7.500" width="9" height="9" fill="#f2f2f2" stroke="#333" stroke-width="1.300"/></svg>
 <svg class="ic" style="left:523px;top:54px" width="18" height="18" viewBox="0 0 18 18"><path d="M15.500,1v16M13,1v16" stroke="#222" stroke-width="1.300"/><path d="M3,3.500h7M7.500,1.500l2.500,2l-2.500,2" stroke="#222" fill="none" stroke-width="1.200"/><path d="M1,8h12M1,11.500h12M1,15h12" stroke="#222" stroke-width="1.300"/><path d="M9,8h4M9,11.500h4M9,15h4" stroke="#4e9ae6" stroke-width="1.800"/></svg>
 <!-- col3 -->
 <svg class="ic" style="left:548px;top:5px" width="20" height="19" viewBox="0 0 20 19"><path d="M1,7h5M6,2.500v9h2.500l1.500,-1.500h4l1.500,1.500V2.500L14,4h-4L8.500,2.500z" fill="#fff" stroke="#222" stroke-width="1.100" stroke-linejoin="round"/><path d="M11,10l7,7M18,10l-7,7" stroke="#d8202a" stroke-width="2.200"/></svg>
 <svg class="ic" style="left:548px;top:31px" width="20" height="16" viewBox="0 0 20 16"><path d="M1,8h5M6,3v10h2.500l1.500,-2h4l1.500,2V3L14,5h-4L8.500,3z" fill="#fff" stroke="#222" stroke-width="1.100" stroke-linejoin="round"/></svg>
 <svg class="ic" style="left:549px;top:55px" width="17" height="17" viewBox="0 0 17 17"><path d="M2.500,2.500l12,12M14.500,2.500l-12,12" stroke="#a01018" stroke-width="4.600" stroke-linecap="round"/><path d="M2.500,2.500l12,12M14.500,2.500l-12,12" stroke="#e8404a" stroke-width="2.800" stroke-linecap="round"/></svg>
 <!-- View panel -->
 <svg class="ic" style="left:579px;top:6px" width="14" height="18" viewBox="0 0 14 18" opacity=".85"><path d="M7,1.500c3,0 5,2 5,4.800c0,2 -1.200,3 -2,4.200v2h-6v-2c-0.800,-1.200 -2,-2.200 -2,-4.200c0,-2.800 2,-4.800 5,-4.800z" fill="#f2f2f2" stroke="#c4c4c4" stroke-width="1.200"/><path d="M4.500,14h5M5,16h4" stroke="#c4c4c4" stroke-width="1.300"/></svg>
 <div class="dd" style="left:599px;top:14px;border-top-color:#999"></div>
 <svg class="ic" style="left:578px;top:31px" width="18" height="17" viewBox="0 0 18 17" opacity=".85"><path d="M16.500,1l-7,8l2,2z" fill="#d0d0d0" stroke="#bcbcbc"/><path d="M9,9.500c-3,0 -3,4 -7.500,5.500c4,1 9,0 9.500,-3.500z" fill="#d8d8d8" stroke="#bcbcbc"/></svg>
 <div class="dd" style="left:599px;top:38px;border-top-color:#999"></div>
 <svg class="ic" style="left:578px;top:55px" width="18" height="18" viewBox="0 0 18 18"><path d="M1,2h16" stroke="#111" stroke-width="2"/><path d="M1,6h16" stroke="#111" stroke-width="1.200"/><path d="M1,10h9" stroke="#111" stroke-width="1" stroke-dasharray="2 1"/><path d="M12.500,8h3v4h2.500l-4,4.500l-4,-4.500h2.500z" fill="#2b6fd0" stroke="#17458a" stroke-width=".8"/></svg>
 <!-- Measure -->
 <svg class="ic" style="left:620px;top:10px" width="32" height="20" viewBox="0 0 32 20" opacity=".9"><path d="M2,5h27M6,1.500l-4.500,3.500l4.500,3.500zM25,1.500l4.500,3.500l-4.500,3.500z" fill="#c6c6c6" stroke="#c6c6c6" stroke-width="1.200"/><rect x="1.500" y="12.500" width="28" height="5" fill="#dedede" stroke="#c6c6c6"/></svg>
 <div class="dd" style="left:656px;top:19px;border-top-color:#777"></div>
 <svg class="ic" style="left:619px;top:39px" width="34" height="34" viewBox="0 0 34 34"><path d="M5,27.500L27,5.500" stroke="#222" stroke-width="1.500"/><path d="M5,27.500L7.100,21.100L11.400,25.400z M27,5.500L24.900,11.900L20.600,7.600z" fill="#222"/><path d="M1,20.500l9,10M22,1.500l9.500,9" stroke="#222" stroke-width="1.400"/></svg>
 <div class="dd" style="left:656px;top:55px;border-top-color:#444"></div>
 <!-- Create -->
 <svg class="ic" style="left:675px;top:5px" width="32" height="32" viewBox="0 0 32 32"><path d="M5,1.500h-3.500v29h3.500M27,1.500h3.500v29h-3.500" fill="none" stroke="#222" stroke-width="1.400"/><path d="M5.500,8l2.500,-3h8l-2.500,3z M5.500,8h8v10h-8z" fill="#8ec0ee" stroke="#2b5f9e" stroke-width="1.100" stroke-linejoin="round"/><path d="M13.500,8l2.500,-3v10l-2.500,3z" fill="#c8e0f6" stroke="#2b5f9e" stroke-width="1.100" stroke-linejoin="round"/><path d="M5.500,18h8v8h-8z M13.500,18l2.500,-2h8l-2.500,2z M13.500,18h8v8h-8z M21.500,18l2.500,-2v8l-2.500,2z" fill="#ececec" stroke="#333" stroke-width="1.100" stroke-linejoin="round"/></svg>
 <svg class="ic" style="left:713px;top:3px" width="34" height="34" viewBox="0 0 34 34"><path d="M5,3.500h-3.500v29h3.500M27,3.500h3.500v29h-3.500" fill="none" stroke="#222" stroke-width="1.400"/><circle cx="12" cy="14" r="7" fill="#e4e4e4" stroke="#333" stroke-width="1.300"/><path d="M12,17l3,-3h10l-3,3z M12,17h10v10h-10z M22,17l3,-3v10l-3,3z" fill="#f0f0f0" stroke="#333" stroke-width="1.200" stroke-linejoin="round"/><g transform="translate(26 8.500) scale(.78) translate(-25 -8)"><path d="M25,1l1.500,4l4,-2.500l-2,4l4.500,1l-4.500,1.500l2,4l-4,-2.500l-1.500,4.500l-1.500,-4.500l-4,2.500l2,-4l-4.500,-1.500l4.500,-1l-2,-4l4,2.500z" fill="#f47b20" stroke="#c85000" stroke-width=".6"/><circle cx="25" cy="7.500" r="2.500" fill="#ffd84a"/></g></svg>
 <svg class="ic" style="left:675px;top:41px" width="32" height="32" viewBox="0 0 32 32"><path d="M9,2l21,7v14l-21,-7z" fill="#f4f4f4" stroke="#333" stroke-width="1.200" stroke-linejoin="round"/><path d="M6,6l21,7v14l-21,-7z" fill="#8ec0ee" stroke="#2b5f9e" stroke-width="1.200" stroke-linejoin="round"/><path d="M3,9l3,-1.500l19,6.500v14l-3,1.500z" fill="#c9def4" stroke="#2b5f9e" stroke-width="1" stroke-linejoin="round"/><path d="M1.500,11.500c0,-2 1,-2.500 3,-2l17,6c1.500,0.500 2,1.500 2,3v10c0,1.500 -1,2 -2.500,1.500l-17,-6c-1.500,-0.500 -2.500,-1.500 -2.500,-3z" fill="#ececec" stroke="#333" stroke-width="1.400"/></svg>
 <svg class="ic" style="left:713px;top:41px" width="33" height="32" viewBox="0 0 33 32" opacity=".9"><g fill="#f4f4f4" stroke="#c2c2c2" stroke-width="1.200"><rect x="1.500" y="1.500" width="7" height="6"/><rect x="23.500" y="1.500" width="7" height="6"/><rect x="1.500" y="23.500" width="11" height="6"/><path d="M25,18l5,5l-5,5l-5,-5z"/></g><path d="M11,4.500h10M18.500,2.500l2.500,2l-2.500,2M5,10v10M3,17.500l2,2.500l2,-2.500M12,10l8,8M20,14.500v3.500h-3.500" fill="none" stroke="#c2c2c2" stroke-width="1.300"/></svg>
</div>

<!--TOP_END--><!--LEFT_START--><style>
.pnl{position:absolute;left:0;width:264px;background:#f0f0f0;border:1px solid #9a9a9a;border-left:none}
.pttl{position:absolute;left:1px;top:2px;width:260px;height:17px;background:linear-gradient(#e6eef8,#c6d6e8);font-size:12px;color:#1a1a1a;padding:1px 0 0 2px;white-space:nowrap}
.xbtn{position:absolute;left:247px;top:3px;width:11px;height:11px;border:1px solid #6b7684;border-radius:2px;background:#eef1f5}
.row{position:absolute;left:5px;width:237px;height:18px;border-bottom:1px dotted #9a9a9a;background:#fff;font-size:12px;white-space:nowrap}
.row b{position:absolute;left:10px;top:1px;font-weight:normal}
.row i{position:absolute;left:123px;top:1px;font-style:normal}
.row u{position:absolute;left:118px;top:0;width:0;height:18px;border-left:1px dotted #9a9a9a}
.ebtn{letter-spacing:-0.4px;text-indent:-2px;position:absolute;left:120px;top:1px;width:115px;height:15px;border:1px solid #5a5a5a;border-radius:3px;background:linear-gradient(#fafafa,#e3e3e3 50%,#d2d2d2);text-align:center;font-size:12px;line-height:13px;box-shadow:0 1px 0 #888}
.tr{position:absolute;font-size:12px;white-space:nowrap;color:#111}
.dots{position:absolute;border-top:1px dotted #8a8a8a;height:0}
.vdots{position:absolute;border-left:1px dotted #8a8a8a;width:0}
.pm{position:absolute;width:9px;height:9px;border:1px solid #8c8c8c;background:#fff}
.pm:before{content:"";position:absolute;left:1px;top:3px;width:5px;height:1px;background:#222}
.pm.plus:after{content:"";position:absolute;left:3px;top:1px;width:1px;height:5px;background:#222}
.sbv{position:absolute;background:#f0f0f0}
.thumb{position:absolute;border:1px solid #9a9a9a;border-radius:2px;background:linear-gradient(90deg,#f6f6f6,#dcdcdc)}
.arr{position:absolute;width:0;height:0;border:4px solid transparent}
</style>
<div class="abs" style="left:0;top:172px;width:1px;height:524px;background:#7a7a7a;z-index:5"></div>
<!-- PROPERTIES -->
<div class="abs" style="left:0;top:171px;width:264px;height:1px;background:#777"></div><div class="pnl" style="top:172px;height:299px;border-color:#8e8e8e;border-top-color:#b8c4d2;border-bottom:2px solid #777">
 <div class="pttl" style="letter-spacing:-0.21px">Properties</div>
 <div class="xbtn"><svg width="9" height="9" style="position:absolute;left:0;top:0"><path d="M2,2 L7,7 M7,2 L2,7" stroke="#444" stroke-width="1.3"/></svg></div>
 <!-- type selector -->
 <div class="abs" style="left:4px;top:20px;width:256px;height:74px;border:1px solid #8e8e8e;border-top:2px solid #7a7a7a;background:linear-gradient(#fdfdfd,#efefef)"></div>
 <div class="abs" style="left:8px;top:24px;width:66px;height:66px;border:1px solid #c4c4c4;background:linear-gradient(#fbfbfb,#ececec)">
  <svg width="34" height="34" viewBox="24 213 34 34" style="position:absolute;left:15px;top:15px">
   <path d="M26.700,227.200L33.500,222.800L41.700,232.200L41.100,243.300L28.300,238.900L28.300,228.800Z" fill="#f7f7f9" stroke="#3a3a3a" stroke-width="1.100" stroke-linejoin="round"/>
   <path d="M41.700,232.200L54.700,225.600L53.300,237.200L41.100,243.300Z" fill="#c4c4ca" stroke="#3a3a3a" stroke-width="1.100" stroke-linejoin="round"/>
   <path d="M33.500,222.800L44.400,215.300L54.700,225.600L41.700,232.200Z" fill="#d6d6da" stroke="#3a3a3a" stroke-width="1.100" stroke-linejoin="round"/>
   <path d="M26.300,227.600L33.300,222.400L44.400,215" fill="none" stroke="#333" stroke-width="1.800" stroke-linejoin="round" stroke-linecap="round"/>
   <path d="M32.300,232L35.500,233.200L35.500,240.800L32.300,239.600Z" fill="#4a4a4a"/>
  </svg>
 </div>
 <div class="tr" style="letter-spacing:-0.34px;margin-left:-0.4px;left:78px;top:51px;font-size:12.5px">3D View</div>
 <div class="arr" style="left:248px;top:57px;border-top:5px solid #222;border-bottom:none"></div>
 <!-- combo -->
 <div class="abs" style="left:5px;top:96px;width:172px;height:21px;border:1px solid #707070;border-radius:3px;background:linear-gradient(#f6f6f6,#e2e2e2 60%,#d4d4d4);font-size:12px;padding:3px 0 0 3px;white-space:nowrap;letter-spacing:-0.28px">Floor Plan: Level 1</div>
 <div class="arr" style="left:163px;top:104px;border-top:5px solid #222;border-bottom:none"></div>
 <svg class="abs" style="left:181px;top:95px" width="18" height="18" viewBox="0 0 18 18"><rect x="1.5" y="1.5" width="6" height="6" fill="#fff" stroke="#444"/><rect x="9.500" y="1.500" width="6" height="6" fill="#fff" stroke="#444"/><rect x="1.5" y="9.500" width="6" height="6" fill="#fff" stroke="#444"/><rect x="8.5" y="7.500" width="8" height="9" fill="#f4f4f4" stroke="#333"/><rect x="10" y="9.500" width="5" height="3" fill="#3a5f95"/><path d="M10,14.500h5" stroke="#333"/></svg>
 <div class="tr" style="letter-spacing:-0.21px;margin-left:0.4px;left:203px;top:97px">Edit Type</div>
 <!-- Graphics header -->
 <div class="abs" style="left:5px;top:118px;width:237px;height:18px;background:#dddddd;font-size:12px;padding:2px 0 0 4px;letter-spacing:-0.29px">Graphics</div>
 <svg class="abs" style="left:228px;top:122px" width="10" height="10"><path d="M1.500,5 L4.500,2 L7.500,5 M1.500,9 L4.500,6 L7.500,9" stroke="#111" stroke-width="1.400" fill="none"/></svg>
 <!-- rows -->
 <div class="row" style="top:136px"><b style="letter-spacing:-0.48px;margin-left:0.6px">View Scale</b><u></u><div class="abs" style="left:119px;top:0;width:118px;height:18px;border:1px solid #222;background:#fff;padding:0 0 0 6px;line-height:15px;letter-spacing:0.16px">1/8" = 1'-0"</div></div>
 <div class="row" style="top:154px;color:#7d7d7d"><b style="letter-spacing:-0.45px;margin-left:0.6px">Scale Value&nbsp;&nbsp;&nbsp; 1:</b><u></u><i style="letter-spacing:-1.00px;margin-left:0.0px">96</i></div>
 <div class="row" style="top:172px"><b style="letter-spacing:-0.12px;margin-left:0.6px">Display Model</b><u></u><i style="letter-spacing:0.05px;margin-left:0.6px">Normal</i></div>
 <div class="row" style="top:190px"><b style="letter-spacing:-0.32px;margin-left:0.6px">Detail Level</b><u></u><i style="letter-spacing:-0.48px;margin-left:0.6px">Fine</i></div>
 <div class="row" style="top:208px"><b style="letter-spacing:-0.16px;margin-left:0.6px">Parts Visibility</b><u></u><i style="letter-spacing:-0.13px;margin-left:0.6px">Show Original</i></div>
 <div class="row" style="top:226px"><b style="letter-spacing:-0.08px;margin-left:0.6px">Visibility/Graphics...</b><u></u><div class="ebtn">Edit...</div></div>
 <div class="row" style="top:244px"><b style="letter-spacing:-0.27px;margin-left:0.6px">Graphic Display O...</b><u></u><div class="ebtn">Edit...</div></div>
 <div class="row" style="top:262px;height:5px;overflow:hidden;border-bottom:none"><b style="top:0">Underlay</b><u></u><i style="top:0">None</i></div>
 <!-- scrollbar -->
 <div class="sbv" style="left:243px;top:118px;width:16px;height:151px"></div>
 <div class="arr" style="left:246px;top:125px;border-bottom:4px solid #333;border-top:none"></div>
 <div class="arr" style="left:246px;top:257px;border-top:4px solid #333;border-bottom:none"></div>
 <div class="thumb" style="left:244px;top:137px;width:14px;height:22px"><div style="position:absolute;left:3px;top:7px;width:6px;height:5px;border-top:1px solid #555;border-bottom:1px solid #555"><div style="margin-top:1px;border-top:1px solid #555"></div></div></div>
 <!-- bottom -->
 <div class="tr" style="letter-spacing:-0.15px;margin-left:0.8px;left:7px;top:273px;color:#1a3fb5;text-decoration:underline">Properties help</div>
 <div class="abs" style="left:184px;top:271px;width:74px;height:22px;border:1px solid #b4b4b4;border-radius:3px;background:#f4f4f4;color:#9a9a9a;text-align:center;font-size:12.5px;line-height:20px;letter-spacing:-0.14px">Apply</div>
</div>
<div class="abs" style="left:0;top:472px;width:264px;height:5px;background:#f3f3f3"></div>
<!-- PROJECT BROWSER -->
<div class="pnl" style="top:477px;height:219px;border:2px solid #5e6670;border-left:none;border-bottom:1px solid #8e8e8e">
 <div class="pttl" style="background:linear-gradient(#d6e5f6,#a6c3e5);letter-spacing:-0.185px">Chapter 5 - Project Browser</div>
 <div class="xbtn" style="top:4px;border-color:#4a1c1c;background:linear-gradient(#efb4b0,#cf5f5a)"><svg width="9" height="9" style="position:absolute;left:0;top:0"><path d="M2,2 L7,7 M7,2 L2,7" stroke="#fff" stroke-width="1.6"/></svg></div>
 <div class="abs" style="left:4px;top:21px;width:256px;height:193px;background:#fff;border:1px solid #b0b0b0"></div>
 <!-- tree lines -->
 <div class="vdots" style="left:13px;top:36px;height:162px"></div>
 <div class="vdots" style="left:33px;top:44px;height:154px"></div>
 <div class="vdots" style="left:53px;top:72px;height:126px"></div>
 <div class="pm" style="left:9px;top:26px"></div>
 <div class="dots" style="left:19px;top:30px;width:6px"></div>
 <svg class="abs" style="left:25px;top:22px" width="17" height="17" viewBox="0 0 17 17"><path d="M1,5V1h4 M12,1h4v4 M16,12v4h-4 M5,16H1v-4" stroke="#222" stroke-width="1.300" fill="none"/><path d="M1,3v0 M3,1h0" stroke="#fff" stroke-width="1"/><rect x="5" y="4.500" width="7.500" height="7.500" rx="2.200" fill="#fff" stroke="#222" stroke-width="1.200"/></svg>
 <div class="tr" style="letter-spacing:-0.21px;margin-left:0.2px;left:47px;top:23px">Views (all)</div>
 <div class="pm plus" style="left:29px;top:44px"></div><div class="dots" style="left:39px;top:48px;width:9px"></div>
 <div class="tr" style="letter-spacing:-0.19px;margin-left:0.4px;left:51px;top:41px">Structural Plans</div>
 <div class="pm" style="left:29px;top:62px"></div><div class="dots" style="left:39px;top:66px;width:9px"></div>
 <div class="tr" style="letter-spacing:-0.28px;margin-left:0.4px;left:51px;top:59px">Floor Plans</div>
 <div class="dots" style="left:54px;top:84px;width:14px"></div><div class="tr" style="letter-spacing:-0.13px;margin-left:0.2px;left:71px;top:77px">'Typical Elevator Shaft</div>
 <div class="dots" style="left:54px;top:102px;width:14px"></div><div class="tr" style="letter-spacing:-0.18px;margin-left:0.2px;left:71px;top:95px">Corridor Parapet</div>
 <div class="dots" style="left:54px;top:120px;width:14px"></div><div class="abs" style="left:68px;top:112px;width:43px;height:17px;background:#3a8ee6"></div><div class="tr" style="letter-spacing:-0.41px;margin-left:0.2px;left:71px;top:113px;color:#fff">Level 1</div>
 <div class="dots" style="left:54px;top:138px;width:14px"></div><div class="tr" style="letter-spacing:-0.41px;margin-left:0.2px;left:71px;top:131px">Level 2</div>
 <div class="dots" style="left:54px;top:156px;width:14px"></div><div class="tr" style="letter-spacing:-0.41px;margin-left:0.2px;left:71px;top:149px">Level 3</div>
 <div class="dots" style="left:54px;top:174px;width:14px"></div><div class="tr" style="letter-spacing:-0.41px;margin-left:0.2px;left:71px;top:167px">Level 4</div>
 <div class="dots" style="left:54px;top:192px;width:14px"></div><div class="tr" style="letter-spacing:-0.41px;margin-left:0.2px;left:71px;top:185px">Level 5</div>
 <!-- v scrollbar -->
 <div class="sbv" style="left:243px;top:22px;width:16px;height:176px"></div>
 <div class="arr" style="left:246px;top:28px;border-bottom:4px solid #333;border-top:none"></div>
 <div class="arr" style="left:246px;top:190px;border-top:4px solid #333;border-bottom:none"></div>
 <div class="thumb" style="left:244px;top:40px;width:14px;height:21px"><div style="position:absolute;left:3px;top:7px;width:6px;height:5px;border-top:1px solid #555;border-bottom:1px solid #555"><div style="margin-top:1px;border-top:1px solid #555"></div></div></div>
 <!-- h scrollbar -->
 <div class="sbv" style="left:5px;top:198px;width:254px;height:16px"></div>
 <div class="arr" style="left:8px;top:202px;border-right:4px solid #333;border-left:none"></div>
 <div class="arr" style="left:232px;top:202px;border-left:4px solid #333;border-right:none"></div>
 <div class="thumb" style="left:23px;top:199px;width:200px;height:13px;background:linear-gradient(#f6f6f6,#dcdcdc)"><div style="position:absolute;left:96px;top:3px;width:6px;height:5px;border-left:1px solid #555;border-right:1px solid #555"><div style="margin-left:1px;height:5px;border-left:1px solid #555"></div></div></div>
</div>
<!-- cursor in browser -->
<svg class="abs" style="left:88px;top:598px" width="14" height="22" viewBox="0 0 14 22"><path d="M1,1 L1,17 L4.500,13.500 L7.500,20 L10,19 L7,12.500 L12,12.500 Z" fill="#fff" stroke="#000" stroke-width="1"/></svg>
<!--LEFT_END-->
<!--BOTTOM_START--><!-- viewport frame -->
<div class="abs" style="left:264px;top:172px;width:6px;height:524px;background:#f4f4f4;border-right:1px solid #bdbdbd"></div>
<div class="abs" style="left:270px;top:171px;width:1010px;height:1px;background:#6e6e6e"></div>
<div class="abs" style="left:270px;top:171px;width:2px;height:525px;background:linear-gradient(90deg,#8a8a8a,#e8e8e8)"></div>
<!-- v scrollbar of viewport -->
<div class="abs" style="left:1261px;top:172px;width:19px;height:504px;background:#f1f1f1;z-index:2"></div>
<div class="arr" style="z-index:3;left:1266px;top:178px;border-bottom:4px solid #444;border-top:none"></div>
<div class="arr" style="z-index:3;left:1266px;top:667px;border-top:4px solid #444;border-bottom:none"></div>
<div class="thumb" style="z-index:3;left:1263px;top:418px;width:15px;height:15px;background:linear-gradient(#fafafa,#d8d8d8)"></div>
<!-- view control bar + h scroll -->
<div class="abs" style="left:272px;top:676px;width:1008px;height:20px;background:#f0f0f0;border-top:1px solid #fafafa"></div>
<div class="abs" style="left:284px;top:679px;font-size:12px;letter-spacing:-0.29px;color:#111;white-space:nowrap" id="vscale">1/8" = 1'-0"</div>
<svg class="abs" style="left:349px;top:677px" width="240" height="18" viewBox="349 677 240 18">
 <!-- detail level -->
 <rect x="351.500" y="679.500" width="14" height="10" fill="#fff" stroke="#333" stroke-width="1.200"/><rect x="352" y="680" width="4" height="3" fill="#555"/><rect x="360" y="680" width="5" height="3" fill="#555"/><rect x="356" y="683" width="4" height="3" fill="#777"/><rect x="352" y="686" width="4" height="3" fill="#999"/><rect x="360" y="686" width="5" height="3" fill="#999"/>
 <!-- visual style -->
 <path d="M373.500,683l3,-3h11l-3,3z" fill="#cfe2f5" stroke="#2b5f9e"/><rect x="373.500" y="683" width="11" height="8" fill="#5b9ae0" stroke="#2b5f9e"/><path d="M384.500,683l3,-3v8l-3,3z" fill="#9cc4ee" stroke="#2b5f9e"/><path d="M375,686h8" stroke="#d33" stroke-width="1.500"/><path d="M375,689h8" stroke="#3a3" stroke-width="1.500"/>
 <!-- sun -->
 <circle cx="399" cy="684" r="4" fill="#fbd34a" stroke="#d8901a"/><path d="M399,677.500v2M393.500,679l1.500,1.500M404.500,679l-1.500,1.500M392.500,684h2M394,689.500l1.500,-1.500" stroke="#d8901a" stroke-width="1.200"/><path d="M401,686l6,6M407,686l-6,6" stroke="#d8202a" stroke-width="2"/>
 <!-- shadows off -->
 <circle cx="422" cy="684" r="4" fill="#eaf2fb" stroke="#3a78c8" stroke-width="1.300"/><path d="M417,691.500h8" stroke="#333" stroke-width="1.500"/><path d="M424,686l6,6M430,686l-6,6" stroke="#d8202a" stroke-width="2"/>
 <!-- render teapot -->
 <path d="M434.500,681.500l3,1.500l1.500,3M439,684c0,-2 2,-3 4.500,-3c2.500,0 4.500,1 4.500,3l-1,5h-7z" fill="#fff" stroke="#444" stroke-width="1.100" stroke-linejoin="round"/><path d="M441.500,680.500h4" stroke="#444" stroke-width="1.200"/><circle cx="450.500" cy="686" r="2.800" fill="#dcecfb" stroke="#3a78c8" stroke-width="1.200"/><path d="M449.500,689.500h2v2.200h-2z" fill="#3a78c8"/>
 <!-- crop -->
 <path d="M456,686h3.500M459.500,683v9.500M459.500,683h8" fill="none" stroke="#2b5f9e" stroke-width="2"/><path d="M462,680.500h9.500v3" fill="none" stroke="#222" stroke-width="1.200" stroke-dasharray="2 1"/><path d="M465,684l6.500,6.500M471.500,684l-6.500,6.500" stroke="#d8202a" stroke-width="2"/>
 <!-- show crop -->
 <path d="M477,687h3.500M480.500,684v8.500M480.500,684h6" fill="none" stroke="#2b5f9e" stroke-width="2"/><path d="M483,681h8" fill="none" stroke="#222" stroke-width="1.200" stroke-dasharray="2 1"/><circle cx="490" cy="686" r="2.800" fill="#dcecfb" stroke="#3a78c8" stroke-width="1.200"/><path d="M489,689.500h2v2.200h-2z" fill="#3a78c8"/>
 <!-- lock 3d -->
 <path d="M498,686l5,-5.500l6,2v3" fill="#f4f4f4" stroke="#333" stroke-width="1.200" stroke-linejoin="round"/><path d="M499.500,686v6h5" fill="none" stroke="#333" stroke-width="1.200"/><rect x="506.500" y="687.500" width="6" height="5" fill="#8cc0a0" stroke="#2a6a4a"/><path d="M507.500,687.500v-2c0,-2 4,-2 4,0v2" fill="none" stroke="#333" stroke-width="1.100"/>
 <!-- glasses -->
 <path d="M518,683.500c1.500,-1.500 3,-1 4,1l2,4c1,1.500 2.500,1.500 3.500,0.500l3,-4c1.500,-1.500 3.500,-1 4.500,0.500" fill="none" stroke="#333" stroke-width="1.200"/><ellipse cx="522.500" cy="688.500" rx="2.800" ry="2.200" fill="#fff" stroke="#333" stroke-width="1.100"/><ellipse cx="531" cy="687" rx="3" ry="2.400" fill="#fff" stroke="#333" stroke-width="1.100"/>
 <!-- bulb -->
 <circle cx="547" cy="684" r="2.800" fill="#dcecfb" stroke="#3a78c8" stroke-width="1.300"/><path d="M546,687.500h2v3h-2z" fill="#3a78c8"/>
 <!-- analysis -->
 <path d="M563,692v-8l4,-4h10v8" fill="none" stroke="#333" stroke-width="1.100"/><path d="M563,684h10l4,-4M573,684v8M566.500,692v-8l4,-4M570,692v-8l4,-4M563,688h10l4,-4M565,682h10M577,684v4" fill="none" stroke="#333" stroke-width=".9"/><path d="M563,692v-8M566.500,692v-8M570,692v-8M573,692v-8M563,688h10M563,684h10" stroke="#b01818" stroke-width="1.100"/>
</svg>
<div class="arr" style="left:584px;top:681px;border-right:5px solid #333;border-left:none"></div>
<div class="arr" style="left:1249px;top:681px;border-left:5px solid #111;border-right:none"></div>
<div class="thumb" style="left:913px;top:678px;width:15px;height:15px;background:linear-gradient(#fafafa,#d8d8d8)"></div>
<svg class="abs" style="left:1265px;top:680px" width="13" height="13"><g fill="#9a9a9a"><rect x="9" y="3" width="2" height="2"/><rect x="9" y="7" width="2" height="2"/><rect x="5" y="7" width="2" height="2"/><rect x="9" y="11" width="2" height="2"/><rect x="5" y="11" width="2" height="2"/><rect x="1" y="11" width="2" height="2"/></g></svg>
<!-- status bar -->
<div class="abs" style="left:0;top:696px;width:1280px;height:24px;background:linear-gradient(#e8e8e8,#c8c8c8);border-top:1px solid #5e5e5e"></div>
<div class="abs" style="left:388px;top:700px;width:197px;height:20px;background:#fdfdfd;border:1px solid #e2e2e2"></div>
<div class="abs" style="left:576px;top:700px;width:16px;height:20px;background:#f4f4f4"></div>
<div class="dd" style="left:582px;top:708px;border-top-color:#999"></div>
<div class="abs" style="left:980px;top:699px;width:96px;height:21px;background:#f8f8f8;border:1px solid #d0d0d0;font-size:12.500px;color:#555;padding:2px 0 0 4px;white-space:nowrap;letter-spacing:-0.2px">Main Model</div>
<div class="dd" style="left:1064px;top:708px;border-top-color:#999"></div>
<div class="abs" id="wm" style="left:1087px;top:688px;font-size:24px;font-weight:bold;color:#fff;white-space:nowrap;letter-spacing:-0.3px;text-shadow:0 0 3px rgba(0,0,0,.55),1px 1px 2px rgba(0,0,0,.5)">video2brain<span style="font-weight:normal">.com</span></div>
<!-- app button R -->
<svg class="abs" style="left:0;top:0" width="42" height="42" viewBox="0 0 42 42">
 <defs><linearGradient id="rg" x1="0" y1="0" x2="0.300" y2="1"><stop offset="0" stop-color="#f6d0f0"/><stop offset=".5" stop-color="#c45cb4"/><stop offset="1" stop-color="#7a2272"/></linearGradient>
 <radialGradient id="gl" cx=".2" cy=".1" r=".9"><stop offset="0" stop-color="#fff" stop-opacity=".55"/><stop offset=".6" stop-color="#fff" stop-opacity=".12"/><stop offset="1" stop-color="#fff" stop-opacity="0"/></radialGradient></defs>
 <path d="M1,1h39v9c-14,2 -30,10 -39,24z" fill="url(#gl)"/>
 <g transform="translate(6.500 27.500) rotate(-3) skewX(7) scale(.78 1)" font-family="Liberation Sans" font-weight="bold" font-size="35">
  <text x="2.500" y="3.500" fill="#4a1248">R</text><text x="1.800" y="2.500" fill="#5e1a5a">R</text><text x="1" y="1.500" fill="#7a2272">R</text><text x="0" y="0" fill="url(#rg)">R</text>
 </g>
 <path d="M30,18.500h7.500l-3.750,4.500z" fill="#1c1c1c"/>
</svg>
<!--BOTTOM_END-->
</div></body></html>
